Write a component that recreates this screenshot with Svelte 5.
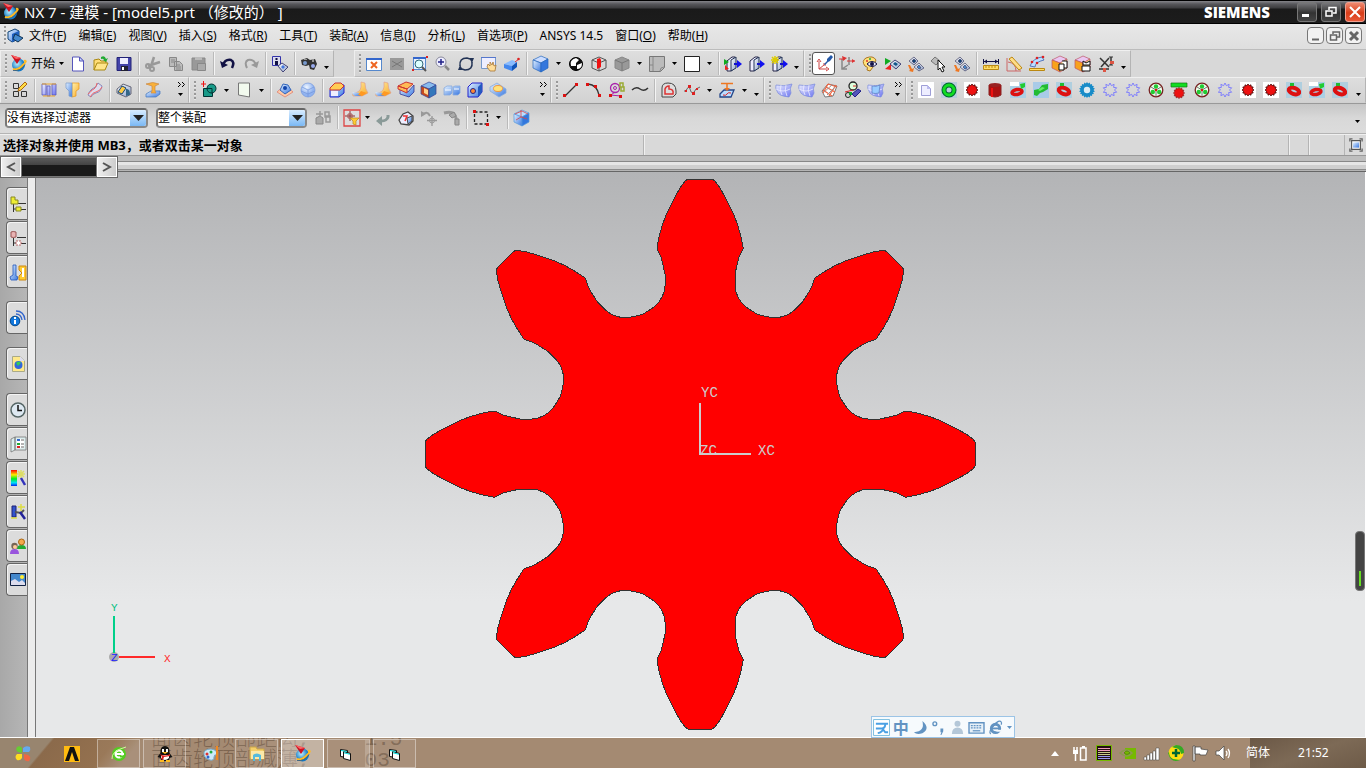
<script>
    const menus = [
        ['文件', 'F'], ['编辑', 'E'], ['视图', 'V'], ['插入', 'S'], ['格式', 'R'], ['工具', 'T'], ['装配', 'A'],
        ['信息', 'I'], ['分析', 'L'], ['首选项', 'P'], ['ANSYS 14.5', ''], ['窗口', 'O'], ['帮助', 'H']
    ];

    const standardTools = 'new open save | cut copy paste | undo redo | info | find'.split(' ');
    const viewTools = 'fit fitoff zoombox zoom rotate pan persp | cube v shade section sectionoff v sheet v white v | door1 door2 door3'.split(' ');
    const utilityTools = 'wcs axes palette showhide hide1 pick hide2 | ruler angle measure copybox linkbox dims'.split(' ');
    const selectionTools = 'link | snapfilter vtight back body movept curve | marquee v | cubeaxis'.split(' ');

    const row2 = [
        { min: 189, more: '»', tools: 'grid | slab revolve sweep | shell | extrude'.split(' ') },
        { min: 362, more: '»', tools: 'sketch v plane v | offset sphere | block horn horn ribs pocket split hole emboss'.split(' ') },
        { min: 211, more: 'v', tools: 'line arc circles spline | outline points v project v'.split(' ') },
        { min: 142, more: '»', tools: 'surf surf mesh swept patch'.split(' ') },
        { min: 0, more: 'v', tools: 'doc ring star drum gearred shaft redring bluering bluestar bluestar wheel rack wheel bluestar star star redring gearred redring'.split(' ') }
    ];

    const sideTabs = [
        ['assembly', 0], ['parts', 0], ['reuse', 0], ['web', 1], ['page', 1], ['clock', 1],
        ['book', 0], ['rainbow', 0], ['process', 0], ['people', 0], ['photo', 0]
    ];

    const tasks = [
        ['flower', 'plain'], ['ansys', 'plain'], ['browser', ''], ['penguin', ''], ['paint', 'plain'],
        ['folder', ''], ['nx', 'active'], ['vb', 'stack'], ['vb', '']
    ];

    const tray = ['plug', 'chip', 'nvidia', 'signal', 'shield', 'flag', 'sound'];

    const cube = (top, left, right, line) =>
        `<g stroke="${line}" stroke-width=".7" stroke-linejoin="round"><path fill="${top}" d="M0 4 8 0l7 3-7 4z"/><path fill="${left}" d="M0 4l8 3v9l-8-4z"/><path fill="${right}" d="M8 7l7-4v9l-7 4z"/></g>`;
    const door = (extra) =>
        `<path fill="#eef" stroke="#224" d="M2 5l5-4h3v11l-4 3H2z"/><path fill="url(#silver)" stroke="#235" d="M6 4l5-3v11l-5 3z"/><path stroke="#11c" stroke-width="2" d="M9 8h5"/><path fill="#11e" d="M12 4l5 4-5 4z"/>${extra}`;
    const horn = '<path fill="url(#gold)" stroke="#d98" stroke-width=".6" d="M9 0l4 1q0 6 3 10l-6 3H1q-1-2 0-3 7 0 8-6z"/><path fill="url(#blue)" d="M1 10l7 1 1 3H3q-4-2-2-4z"/><path fill="#f92" d="M9 9l6 2-5 3-4-1z"/>';
    const surf = '<path fill="url(#violet)" stroke="#78d" stroke-width=".7" d="M0 3q8 2 16-1-3 5-1 9l-2 4Q2 14 1 9q-2-3-1-6z"/><path fill="none" stroke="#eef" stroke-width=".8" d="M5 3q-2 5 1 10M10 3q-2 5 1 11M0 7q7 4 14 0"/>';
    const eyeStack = '<g stroke="#446" stroke-width=".7"><path fill="url(#silver)" d="M1 5l5-4 4 4-4 4z"/><path fill="url(#silver)" d="M6 11l5-4 5 5-5 3z"/><path fill="#147" d="M4 5l2-2 2 2-2 2z"/><path fill="#48c" d="M9 11l2-2 2 3-2 1z"/></g>';

    const teeth = (n, outer, inner) =>
        Array.from({ length: n * 2 }, (_, i) => {
            const r = i % 2 ? inner : outer;
            const a = (i * Math.PI) / n;
            return `${(8 + r * Math.sin(a)).toFixed(1)},${(8 - r * Math.cos(a)).toFixed(1)}`;
        }).join(' ');

    const icons = {
        nx: '<circle cx="7.5" cy="9" r="6.5" fill="url(#globe)"/><path fill="none" stroke="#fb2" stroke-width="2" d="M2 13q5 2 10-4 5-5 1-4"/><path fill="none" stroke="#258" stroke-width=".8" d="M2 14.500q7 1 12-6"/><path fill="#c12" d="M0-1l10 3-4 6z"/><path fill="#f66" d="M0-1l10 3-5 1z"/>',
        part: '<path fill="url(#blue)" stroke="#147" d="M1 4l7-3 4 2v8l-7 3-4-3z"/><path fill="#1d5fc0" d="M5 6l7-3v8l-7 3z"/><path fill="#48c" stroke="#135" d="M8 6l8 4-5 4-5-3z"/>',
        new: '<path fill="#fff" stroke="#55b" d="M2.500 1h7l4 4v10h-11z"/><path fill="#cdf" stroke="#55b" d="M9.500 1v4h4z"/>',
        open: '<path fill="#fd7" stroke="#a81" d="M1 14V4l5-1 2 2h5v2"/><path fill="#ffe58a" stroke="#a81" d="M1 14l3-7h11l-3 7z"/><path fill="#2a3" d="M8 1q4-2 5 2l2-1-2 4-3-2h1q-1-2-3-1z"/>',
        save: '<path fill="#44a" stroke="#227" d="M1 1.500h14v13H1z"/><path fill="#eef" d="M4 2h8v6H4z"/><path fill="#223" d="M5 10h7v5H5z"/><path fill="#fff" d="M6 11h2v3H6z"/>',
        cut: '<path fill="none" stroke="#999" stroke-width="2.500" d="M9 1L6 10M15 6L3 10"/><circle cx="3" cy="10" r="2" fill="none" stroke="#999" stroke-width="2"/><circle cx="7" cy="13" r="2" fill="none" stroke="#999" stroke-width="2"/>',
        copy: '<path fill="#bbb" stroke="#888" d="M1.500 1.500h7v9h-7zM6.500 5.500h5l3 3v6h-8z"/><path stroke="#888" d="M3 4h4M3 6h3M8 9h4M8 11h5M8 13h5"/>',
        paste: '<path fill="#999" stroke="#888" d="M1 2h13v12H1z"/><path fill="#bbb" d="M4 1h7v3H4z"/><path fill="#aaa" stroke="#888" d="M6.500 7.500h8v7h-8z"/>',
        undo: '<path fill="none" stroke="#114" stroke-width="2.500" d="M3 9q2-6 8-5 4 2 1 8"/><path fill="#114" d="M0 5l2 7 6-3z"/>',
        redo: '<path fill="none" stroke="#999" stroke-width="2" d="M13 9q-2-6-8-5-4 2-1 8"/><path fill="#999" d="M16 5l-2 7-6-3z"/>',
        info: '<path fill="#dde" stroke="#33a" d="M.500.500h8v9h-8z"/><path fill="#114" d="M3.500 2h2v2h-2zM3 5h3v4H3z"/><path fill="url(#silver)" stroke="#447" d="M6 10l4-3 6 4-5 5z"/><path fill="#47d" d="M9 11l2-2 2 2-2 2z"/>',
        find: '<path fill="#333" d="M0 4l6-2 3 2 5-1 2 5-3 6-4-1-1-4-3 1-4-1z"/><circle cx="4" cy="7" r="2" fill="#79c"/><circle cx="12" cy="10" r="2" fill="#9ae"/><path fill="#999" d="M3 3h3v1H3zM11 3h2v3h-2z"/>',
        fit: '<path fill="#fff" stroke="#58c" d="M.500 2.500h15v12H.500z"/><path fill="#36c" d="M0 2h16v2H0z"/><path stroke="#e62" stroke-width="2" d="M5 6l6 6M11 6l-6 6"/>',
        fitoff: '<path fill="#999" d="M1 2h14v12H1z"/><path stroke="#777" d="M3 5l10 6M13 5L3 11"/>',
        zoombox: '<path fill="#e8f0ff" stroke="#58c" d="M1.500 2.500h12v11h-12z"/><path fill="#36c" d="M1 1h13v2H1z"/><circle cx="7" cy="8" r="4" fill="#dff" stroke="#367"/><path stroke="#555" stroke-width="2" d="M10 11l4 4"/><path fill="#d22" d="M14 0h2v2h-2zM0 13h2v2H0z"/>',
        zoom: '<circle cx="6" cy="6" r="5" fill="#eef" stroke="#889"/><path stroke="#228" stroke-width="1.500" d="M3 6h6M6 3v6"/><path stroke="#888" stroke-width="2.500" d="M10 10l4 4"/>',
        rotate: '<path fill="none" stroke="#235" stroke-width="1.500" d="M2 10q-1-8 7-8l3 1M14 6q1 8-7 8l-3-1"/><path fill="#235" d="M11 2h5l-2 5zM5 14H0l2-5z"/>',
        pan: '<path fill="#eef" stroke="#79c" d="M.500 1.500h14v11H.500z"/><path fill="#57c" d="M0 1h15v1H0z"/><path fill="#fd9" stroke="#a73" stroke-width=".8" d="M7 8l2 2V6l2 3 1-3 1 4 2-1-1 6H9l-3-4z"/>',
        persp: '<path fill="#8bf" d="M0 8l8-4 5 2-5 4z"/><path fill="#48e" d="M0 8l8 2v5l-8-3z"/><path fill="#15b" d="M8 10l5-4v5l-5 4z"/><path stroke="#d33" d="M11 6l4-3"/><circle cx="14.500" cy="3" r="1.300" fill="#d22"/>',
        cube: cube('#cdf', 'url(#blue)', '#37d', '#26b'),
        cubeaxis: cube('#bdf', 'url(#blue)', '#37d', '#59d') + '<path fill="none" stroke="#d44" stroke-width=".8" d="M1 4l7-3 6 3M7 0v7l6 2M7 7l-5 3"/>',
        shade: '<circle cx="8" cy="8" r="6.500" fill="#111" stroke="#000"/><path fill="#fff" d="M8 2q-7 2-5 8h5V7l3-3zM9 9l5-2q0 6-5 6z"/>',
        section: '<path fill="none" stroke="#555" d="M1 4l7-3 7 3v8l-7 3-7-3zM1 4l7 3 7-3M8 7v8"/><path fill="#e11" d="M6 3l3-1 1 2v7l-4 2z"/>',
        sectionoff: '<path fill="#999" stroke="#888" d="M1 4l7-3 7 3v8l-7 3-7-3z"/><path fill="none" stroke="#777" d="M1 4l7 3 7-3M8 7v8"/>',
        sheet: '<path fill="#bbb" stroke="#777" d="M.500.500h15v11l-4 4H.500z"/><path fill="none" stroke="#888" d="M4 1v14M1 9h3M11 15q0-4 4-4"/>',
        white: '<path fill="#fff" stroke="#222" d="M.500.500h15v15H.500z"/>',
        door1: door('<path fill="#1a2" d="M-1 3l5 3-5 3z"/><path fill="#e22" d="M0 9l4 4-4 1z"/>'),
        door2: door(''),
        door3: door('<path stroke="#dc0" stroke-width="1.500" d="M4 0v8M0 4h8M1 1l6 6M7 1L1 7"/>'),
        wcs: '<path fill="none" stroke="#c44" d="M3 5v8h8M3 13l5-4M1 6l2-3 2 3M10 11l3 2-3 2M7 8h2v2"/><path fill="#2458a8" d="M11 3l4-4 2 2-3 4-2 1-3 3-1-1 3-3z"/>',
        axes: '<path fill="none" stroke="#888" stroke-width="1.500" d="M3 3v10h5M3 13l6-4M10 1v8"/><path stroke="#d33" d="M0 3h6M8 5h8"/><path fill="#d33" d="M3 0l5 2-4 3zM13 3l3 2-3 2z"/>',
        palette: '<path fill="#ffe07a" stroke="#a72" d="M5 14q2-3-2-4-4-5 1-8 7-3 10 2l-3 7-3 4z"/><circle cx="5" cy="5" r="1" fill="#d33"/><circle cx="8" cy="3" r="1" fill="#2a4"/><path fill="#eef" stroke="#114" d="M5 8q5-5 10 0-5 5-10 0z"/><circle cx="10" cy="8" r="2" fill="#114"/>',
        showhide: '<path fill="#1a2" d="M0 2l6 3-6 4z"/><path fill="#e22" d="M0 13l6-5v6z"/><path fill="url(#silver)" stroke="#447" d="M5 8l5-4 6 4-5 5z"/><path fill="#158" d="M8 8l2-2 3 2-2 2z"/>',
        hide1: eyeStack + '<path fill="#e72" d="M0 9h2l2 4 2-1-1 4-4-1 1-1z"/>',
        pick: '<path fill="#bbb" stroke="#777" d="M0 5l4-4 5 4-4 4z"/><path fill="#fff" stroke="#111" d="M7 4l7 7h-3l2 4-2 1-2-4-2 2z"/>',
        hide2: eyeStack + '<path fill="#e72" d="M0 9h2l2 4 2-1-1 4-4-1 1-1z"/>',
        ruler: '<path stroke="#114" d="M.500 3v5M15.500 3v5M1 5.500h14"/><path fill="#114" d="M1 5.500l3-2v4zM15 5.500l-3-2v4z"/><path fill="#fd6" stroke="#b81" d="M.500 9.500h15v4H.500z"/><path stroke="#b81" d="M3 10v2M6 10v2M9 10v2M12 10v2"/>',
        angle: '<path fill="none" stroke="#c66" d="M1 2v13h14M2 6q8 1 8 9"/><path fill="#fd8" stroke="#b81" d="M3 3l3-2 10 11-3 2z"/>',
        measure: '<path fill="#bdf" stroke="#57b" d="M1 10q3-8 12-9l2 3q-9 2-9 7z"/><g fill="#d22"><circle cx="3" cy="6" r="1.300"/><circle cx="8" cy="2" r="1.300"/><circle cx="14" cy="1" r="1.300"/><circle cx="8" cy="7" r="1.300"/></g><path fill="#fd6" stroke="#b81" d="M.500 12.500h15v2H.500z"/>',
        copybox: cube('#e9c7f2', '#f8a21c', '#ffe08a', '#b56') + '<path fill="#fff" stroke="#111" d="M7 8h5v6H7zM10 5h5v7h-3"/>',
        linkbox: cube('#e9c7f2', '#f8a21c', '#ffe08a', '#b56') + '<path fill="#fff" stroke="#111" d="M7 10h8v5H7zM8 5l3 2 4-2v4H8z"/>',
        dims: '<path fill="none" stroke="#333" stroke-width="1.500" d="M2 2l9 9M11 2L3 11M1 13h10M13 1v8"/><path fill="#d54" d="M5 12h3v4H5zM12 5h4v3h-4z"/><path stroke="#333" d="M11 1h4M11 9h4"/>',
        grid: '<path fill="none" stroke="#333" d="M1.500 1.500h5v5h-5zM1.500 9.500h5v5h-5zM9.500 9.500h5v5h-5z"/><path fill="#fd4" stroke="#a61" d="M6 9l1-3 6-6 2 2-6 6z"/>',
        slab: '<path fill="url(#violet)" stroke="#55b" stroke-width=".8" d="M1 2h4v11H1zM6 4h3v10H6zM11 2h4v11h-4z"/><path stroke="#e9a52c" d="M1 2h14M2 14h12"/>',
        revolve: '<path fill="url(#gold)" stroke="#e91" stroke-width=".7" d="M8 1h7v6l-3 2v5l-4 1z"/><path fill="url(#blue)" stroke="#79c" stroke-width=".7" d="M8 1H2v5l3 3v5l3 1z"/>',
        sweep: '<path fill="#dde" stroke="#88b" d="M1 13q1-4 4-6 4-1 6-6l4 3q-1 6-6 7-4 1-5 4z"/><path fill="none" stroke="#e66" d="M1 12q3-2 4-4 4-1 5-7M3 15q3-5 6-5 4-1 6-5"/>',
        shell: '<path fill="url(#silver)" stroke="#667" d="M1 7l6-5 8 3v7l-5 3-9-4z"/><path fill="#fc4" stroke="#147" d="M6 4l4 2-4 6-4-2z"/><path fill="#368" d="M10 7q4-1 4 6l-4 1z"/>',
        extrude: '<path fill="url(#blue)" stroke="#47b" stroke-width=".7" d="M1 12l5-3h9v3l-4 3H1z"/><path fill="#f9b13a" stroke="#c84" stroke-width=".7" d="M1 2q7-3 13 0l-4 2v5l1 2H6l1-2V4z"/>',
        sketch: '<path fill="#189a88" stroke="#033" d="M2.500 6.500h9v8h-9z"/><circle cx="10.500" cy="6.500" r="4.500" fill="#189a88" stroke="#033"/><path fill="none" stroke="#033" d="M5 6.500h6v5"/><path stroke="#e11" d="M0 2h5M2.500-1v6"/>',
        plane: '<path fill="#f2faee" stroke="#777" d="M2.500 1h11v14l-11-2z"/>',
        offset: '<path fill="#fca" stroke="#d76" stroke-width=".7" d="M0 10l8-7 8 7-8 5z"/><path fill="url(#blue)" stroke="#36b" d="M3 8l3-6 5 1 3 5-6 4z"/><circle cx="8" cy="6" r="2" fill="#14a"/>',
        sphere: '<circle cx="8" cy="8" r="7" fill="url(#globe2)" stroke="#79d" stroke-width=".7"/><path fill="none" stroke="#79d" stroke-width=".8" d="M2 5l6 3 6-3M8 8v7M1 9l7 3 7-3"/>',
        block: '<path fill="url(#blue)" stroke="#22c" d="M1 8l4-5h10v8l-5 4H1z"/><path fill="#fc5" stroke="#c33" d="M1 6l5-5h6l3 3-4 4H1z"/><path fill="#eef" d="M2 9h7v5H2z"/>',
        horn,
        ribs: '<path fill="url(#blue)" stroke="#228" stroke-width=".7" d="M2 7l8 3 6-7v7l-5 5-9-3z"/><path fill="#fb5" stroke="#c33" d="M0 4l8-4 7 2-6 5zM0 4l9 3v4L0 7z"/>',
        pocket: cube('#8be', '#c74a1d', '#37b', '#349') + '<path fill="#ffd28a" d="M3 6l4 2v5l-4-2z"/>',
        split: '<path fill="url(#blue)" stroke="#8ad" stroke-width=".8" d="M0 6l3-2h5v7l-2 2H0zM9 5l2-1h5v7l-2 2H9z"/><path stroke="#fff" d="M1 8h6M10 7h5"/>',
        hole: '<path fill="url(#blue)" stroke="#22c" d="M1 5l4-4h10v9l-4 5H1z"/><path fill="#2458c0" d="M11 5l4-4v9l-4 5z"/><circle cx="6" cy="9" r="2.500" fill="#f83" stroke="#228"/>',
        emboss: '<path fill="url(#blue)" stroke="#8ad" stroke-width=".8" d="M0 5l7-4 9 6v4l-7 4-9-6z"/><ellipse cx="8" cy="6.500" rx="4.500" ry="3" fill="#ffe27a" stroke="#e94"/>',
        line: '<path stroke="#333" stroke-width="1.300" d="M2 14L14 2"/><path fill="#d11" d="M0 12h3v3H0zM12 1h3v3h-3z"/>',
        arc: '<path fill="none" stroke="#333" stroke-width="1.300" d="M2 2q9 1 11 11"/><path fill="#d11" d="M0 1h3v3H0zM8 3h3v3H8zM12 12h3v3h-3z"/>',
        circles: '<circle cx="6" cy="6" r="4.500" fill="none" stroke="#a2a" stroke-width="1.300"/><circle cx="6" cy="6" r="1.500" fill="none" stroke="#a2a"/><path stroke="#a2a" d="M1 13l11 1M2 13l4-3"/><path fill="none" stroke="#9a3" stroke-width="1.500" d="M11 1h3v4h-3zM12 5h3v4h-3z"/><path fill="#d11" d="M0 12h3v3H0zM10 13h3v3h-3z"/>',
        spline: '<path fill="none" stroke="#333" stroke-width="1.500" d="M0 8q4-4 8-1 4 3 8-1"/>',
        outline: '<path fill="#ddd" stroke="#444" d="M1 15V6q0-5 6-5 8 0 8 8v3l-3 3z"/><path fill="none" stroke="#d33" stroke-width="1.500" d="M4 12V7q1-3 4-3v3q5 0 4 5z"/>',
        points: '<path fill="none" stroke="#666" d="M0 9q2 1 3-2 2-4 3 0 2 8 6 0l4-2"/><path fill="#d22" d="M4 3h3v3H4zM1 8h2v2H1zM8 10h3v3H8zM12 6h2v2h-2z"/>',
        project: '<path fill="#bdf" stroke="#248" stroke-width="1.300" d="M1 12l4-4h10l-3 7H1z"/><path fill="none" stroke="#d22" d="M4 13q3 1 4-1t4-1"/><path stroke="#e72" stroke-width="1.500" d="M2 1.500h12M8 1v7"/><path fill="#e72" d="M5 6h6l-3 3z"/>',
        surf,
        mesh: '<path fill="#fff" stroke="#777" d="M0 9l6-7 9 2-4 10-8 1z"/><path fill="none" stroke="#e64" stroke-width="1.300" d="M1 8l9 6M4 5l9 5M6 2l9 3M6 2L1 11M14 3L7 14"/><path fill="none" stroke="#999" d="M2 10l8-7M5 13l8-8"/>',
        swept: '<circle cx="8" cy="4" r="4" fill="#dfd" stroke="#222" stroke-width="1.300"/><circle cx="3" cy="13" r="2.500" fill="none" stroke="#222"/><path fill="#55b" stroke="#228" d="M7 12l6-5 3 2-6 6z"/><path stroke="#d22" d="M0 10l8-2M8 4h3"/><path fill="#1a3" d="M4 10h3v3H4z"/>',
        patch: surf + '<path fill="#9cf" stroke="#57b" stroke-width=".7" d="M4 4q4 1 8-1l-1 8q-4 1-7 0z"/>',
        doc: '<path fill="#fff" d="M0 0h16v16H0z"/><path fill="#eef" stroke="#88c" stroke-width=".8" d="M3.500 3.500h6l3 3v7h-9z"/><path fill="#bbe" d="M9 3v4h4z"/>',
        ring: '<path fill="#bcd" d="M0 0h16v16H0z"/><circle cx="8" cy="8" r="5" fill="none" stroke="#063" stroke-width="5"/><circle cx="8" cy="8" r="5" fill="none" stroke="#1d2" stroke-width="3"/>',
        star: `<path fill="#fff" d="M0 0h16v16H0z"/><polygon points="${teeth(12, 6, 4.5)}" fill="#e11" stroke="#400" stroke-width=".8"/>`,
        drum: '<path fill="#a11" stroke="#822" d="M2 3v10q6 4 12 0V3z"/><ellipse cx="8" cy="3" rx="6" ry="2" fill="#922"/><path fill="#e11" d="M4 6h2v9H4z"/>',
        gearred: '<path fill="#abd0e6" d="M0 0h16v16H0z"/><path fill="#fff" d="M0 0h9v4H0z"/><ellipse cx="7" cy="10" rx="5" ry="2.500" fill="none" stroke="#d11" stroke-width="3.500" transform="rotate(-10 7 10)"/><path fill="#2c3" d="M10 2l5-1v4l-4 2z"/>',
        shaft: '<path fill="#a9cbe8" d="M0 0h16v16H0z"/><path fill="#2b3" d="M1 8l5-1 3-4 6-1v5l-5 3-3 1-3 3-3-1z"/><path fill="#6e6" d="M5 8l4-3 3 1-5 3z"/>',
        redring: '<path fill="#b0cfdf" d="M0 0h16v16H0z"/><ellipse cx="8" cy="9" rx="5.500" ry="3" fill="none" stroke="#d11" stroke-width="4" transform="rotate(20 8 9)"/><path fill="#2b3" d="M4 1h4v3H4z"/>',
        bluering: `<polygon points="${teeth(18, 8, 6.5)}" fill="#178bc8"/><circle cx="8" cy="8" r="3.200" fill="#dcecf4"/>`,
        bluestar: `<polygon points="${teeth(10, 7, 4.5)}" fill="none" stroke="#77f" stroke-width=".9"/>`,
        wheel: '<circle cx="8" cy="8" r="6.800" fill="#efe" stroke="#722" stroke-width="1.300"/><g fill="#2c3"><circle cx="8" cy="4.500" r="2.200"/><circle cx="4.800" cy="10" r="2.200"/><circle cx="11.200" cy="10" r="2.200"/></g><path stroke="#555" stroke-width=".8" d="M8 8L3 5M8 8l5-3M8 8v6"/><circle cx="8" cy="8" r="1.200" fill="#d11"/>',
        rack: `<polygon points="${teeth(12, 5.6, 4.2)}" fill="#e11" stroke="#811" stroke-width=".7" transform="translate(0 3)"/><path fill="#1d2" stroke="#171" stroke-width=".7" d="M0 1h16v4H0z"/>`,
        link: '<path fill="#aaa" stroke="#888" d="M1 8l4-2 3 2v6H1z"/><path fill="none" stroke="#999" stroke-width="1.500" d="M1 4h7M5 1v6M10 2h4v5h-4zM11 6h4v6h-4z"/>',
        snapfilter: '<path fill="#ddd" stroke="#d44" stroke-width="1.300" d="M0 0h16v16H0z"/><path stroke="#833" d="M1 6h10M6 1v10"/><path fill="none" stroke="#a55" d="M4 4h4v4H4z"/><path fill="#fc3" stroke="#b82" stroke-width=".7" d="M6 8h9l-3 3v4l-3-1v-3z"/>',
        back: '<path fill="none" stroke="#8a9a98" stroke-width="3" d="M13 5v2q-1 4-7 4"/><path fill="#8a9a98" d="M7 6l-6 5 6 5z"/>',
        body: '<path fill="#eef" stroke="#444" stroke-width="1.300" d="M1 10l4-6 5-2 5 4v5l-4 4-8-1z"/><path fill="url(#blue)" stroke="#444" d="M9 8l5-2v5l-4 3z"/><path fill="none" stroke="#e33" stroke-width="1.500" d="M5 6h4l-2 5"/>',
        movept: '<path fill="none" stroke="#999" stroke-width="2" d="M1 5q5-5 8 1"/><path stroke="#999" stroke-width="1.300" d="M6 10.500h10M11 6v10"/><circle cx="11" cy="10.500" r="2.500" fill="none" stroke="#999"/><path fill="#999" d="M0 1v6l5-3z"/>',
        curve: '<path fill="none" stroke="#999" stroke-width="3" d="M0 3q7-2 10 1 3 3 2 10"/><path fill="#aaa" stroke="#888" d="M5 5l5-3 2 4-4 2zM11 9h4v6h-4z"/>',
        marquee: '<path fill="none" stroke="#222" stroke-dasharray="3 2" stroke-width="1.300" d="M1.500 2h13v12h-13z"/><path fill="#d11" d="M0 0h3v3H0zM13 13h3v3h-3z"/>',
        full: '<path fill="none" stroke="#666" stroke-width="1.500" d="M1 4V1h3M12 1h3v3M15 12v3h-3M4 15H1v-3"/><path fill="#fff" stroke="#555" stroke-width="1.300" d="M3 3h10v10H3z"/><path fill="url(#blue)" d="M4.500 5h7v6h-7z"/>',
        assembly: '<path stroke="#333" d="M7 7.500h9M10 13.500h6M3.500 8v8M3 13h4" fill="none"/><path fill="#ee3" stroke="#882" d="M1 1h4v3h3v4H1zM6 11h5v4H6z"/>',
        parts: '<path stroke="#333" d="M7 7.500h9M10 13.500h6M3.500 8v8M3 13h4" fill="none"/><path fill="#e9b4b4" stroke="#955" d="M1 2q2-1 5 0v5q-3 1-5 0z"/><path fill="#fff" stroke="#b66" stroke-dasharray="2 1" d="M6 11h5v4H6z"/>',
        reuse: '<path fill="url(#blue)" stroke="#25b" stroke-width=".8" d="M3 1h3v11l2 1-1 3H1l-1-3 3-2z"/><path fill="#fc3" stroke="#c81" d="M9 2h7v14H9v-4l3-3-3-3z"/><path fill="#fff" d="M12 4h2v9h-2z"/>',
        web: '<circle cx="5" cy="11" r="4.800" fill="#17d" stroke="#048"/><path fill="#fff" d="M4 7h2v2H4zM4 10h2v4H4z"/><path fill="none" stroke="#36c" stroke-width="1.300" d="M6 1q8 0 9 9M6 4q5 0 6 6"/>',
        page: '<path fill="#ffe98a" stroke="#aa8" d="M2.500.500h8l4 4v11h-12z"/><path fill="#dde" d="M10 0v5h5z"/><circle cx="8.500" cy="9" r="4" fill="#36d"/><path fill="#3c5" d="M6 7q3-3 5 0l-3 3z"/>',
        clock: '<circle cx="8" cy="8" r="7" fill="#dee9f2" stroke="#566" stroke-width="1.500"/><path fill="none" stroke="#111" stroke-width="1.500" d="M8 3v5.500h4"/>',
        book: '<path fill="#dee" stroke="#777" stroke-width=".8" d="M1 3l4-2v13l-4 2zM5 1h11v13H5z"/><path fill="#fff" d="M7 3h7v9H7z"/><path fill="#36c" d="M7 3h3v2H7z"/><path fill="#2a3" d="M7 7h3v2H7z"/><path fill="#d22" d="M7 10h3v2H7z"/><path stroke="#666" d="M11 4h3M11 8h3M11 11h3"/>',
        rainbow: '<path fill="url(#spectrum)" d="M1 0h6v16H1z"/><path stroke="#dd6" stroke-width="1.500" d="M11 0v8M7 4h8M8 1l6 6M14 1L8 7"/><path stroke="#33b" stroke-width="2.500" d="M11 8l4 7"/>',
        process: '<path fill="#35c" stroke="#227" d="M2 2h4v11H2z"/><path stroke="#555" stroke-width="2" d="M5 8l6 1 3-3"/><path stroke="#dd4" stroke-width="1.500" d="M11 0v7M8 3h7M1 14h6"/><path stroke="#229" stroke-width="2.500" d="M10 8l5 7"/>',
        people: '<path fill="#2a3" d="M7 11q0-4 4.500-4t4.500 4z"/><circle cx="11.500" cy="4" r="3" fill="#f4a94c" stroke="#a61"/><path fill="#95d" d="M0 16q0-5 4.500-5T9 16z"/><circle cx="4.500" cy="8" r="3.200" fill="#765"/><circle cx="5" cy="9" r="2" fill="#fc9"/>',
        photo: '<path fill="#48c" stroke="#124" d="M.500 1.500h15v12H.500z"/><path fill="#dde" d="M1 13V9l4-2 4 3 3-2 3 3v2z"/><circle cx="12" cy="5" r="2" fill="#fe3"/>',
        flower: '<path fill="#6c3" d="M7 7V2Q5-1 2 1q-2 3 1 5z"/><path fill="#6ae" d="M8 6h6q2-2 1-5-4-2-7 1z"/><path fill="#e64" d="M9 8v5q2 3 5 2 3-4-1-6z"/><path fill="#fd2" d="M7 8H2q-3 3 0 6 3 1 5-2z"/>',
        ansys: '<path fill="#fb1" d="M0 0h16v16H0z"/><path fill="#111" d="M1 15L6 1h4l5 14h-4L8 6l-3 9z"/>',
        browser: '<circle cx="8" cy="8" r="7" fill="#5c2"/><circle cx="8" cy="8" r="3.500" fill="none" stroke="#fff" stroke-width="2"/><path fill="#fff" d="M5 7h8v2H5z"/><path fill="#5c2" d="M9 9.500h5v2H9z"/><path fill="none" stroke="#cf9" d="M1 13Q0 5 15 1"/>',
        penguin: '<path fill="#111" d="M8 0q5 0 4.500 7l3 4-3 1-1 3h-7l-1-3-3-1 3-4Q3 0 8 0z"/><path fill="#fff" d="M4 9h8v3q-4 4-8 0zM5 3h2v3H5zM9 3h2v3H9z"/><path fill="#fb2" d="M5 6h6l-3 2zM3 14h4v2H3zM9 14h4v2H9z"/><path fill="#d22" d="M3 8q5 3 10 0v2l-6 1-1 3-2-1 1-2z"/>',
        paint: '<path fill="#cdeaf8" stroke="#7ac" d="M1 9q-1-6 7-6 7 1 6 6-3-1-3 2 0 4-4 3-5-1-6-5z"/><circle cx="4" cy="8" r="1.500" fill="#d33"/><circle cx="8" cy="6" r="1.500" fill="#2a4"/><circle cx="5" cy="11" r="1.500" fill="#36c"/><path stroke="#e82" stroke-width="2" d="M14 0v14"/>',
        folder: '<path fill="#f4cf6a" stroke="#c9a548" d="M1 1h6l1 2h7v10H1z"/><path fill="#fbe9a8" d="M2 5h13v8H2z"/><path fill="#5bd" d="M4 9q4-3 8 0v6h-2v-4H6v4H4z"/>',
        vb: '<path fill="#fff" stroke="#111" d="M2.500 3.500l7 1v7l-7-1z"/><path fill="#fff" stroke="#111" d="M5.500 5.500l7 2v7l-7-2z"/><path stroke="#0dd" d="M3 4.500l6 1M6 6.800l6 1.500"/>',
        plug: '<path stroke="#fff" stroke-width="1.500" d="M2 2v3M5 2v3M3.500 9v7"/><path fill="#fff" d="M1 5h5v4H1z"/><path fill="none" stroke="#fff" stroke-width="1.500" d="M8.500 3h5.500v12H8.500z"/><path fill="#fff" d="M10 1h3v2h-3z"/>',
        chip: '<path fill="#211" stroke="#7b0" d="M.500.500h15v15H.500z"/><path stroke="#e9b" d="M2 3.500h12M2 5.500h12"/><path stroke="#cc8" d="M2 7.500h12M2 9.500h12"/><path stroke="#99e" d="M2 11.500h12M2 13.500h12"/>',
        nvidia: '<path fill="#76b900" d="M5 3h11v11H5z"/><path fill="none" stroke="#8b9a50" stroke-width="1.500" d="M0 8q6-6 12 0-5 6-12 0z"/><path fill="none" stroke="#5a8a10" d="M4 8q3-4 6 0-3 3-6 0z"/>',
        signal: '<g fill="#fff" stroke="#444" stroke-width=".5"><path d="M0 12h2.500v3H0zM3 10h2.500v5H3zM6 8h2.500v7H6zM9 6h2.500v9H9zM12 3h3v12h-3z"/></g>',
        shield: '<circle cx="8" cy="8" r="7.500" fill="#fd1"/><path fill="#3a2" d="M8 0q8 0 8 8l-3 1q-1-6-6-6L4 2zM1 7q0 5 4 7l7 1q-9 4-12-7z"/><path stroke="#063" stroke-width="2.500" d="M4 8h8M8 4v8"/>',
        flag: '<path fill="#fff" stroke="#444" stroke-width=".7" d="M1 1h2v15H1zM3 2h6v2l7 1-2 5H8V9H3z"/>',
        sound: '<path fill="#fff" stroke="#444" stroke-width=".7" d="M0 6h3l5-5v14l-5-5H0z"/><path fill="none" stroke="#fff" stroke-width="1.300" d="M10 6q2 2 0 5M12 4q3 4 0 9"/>',
        pen: '<path fill="#fff" stroke="#7bd" d="M-.500-.500h17v17h-17z"/><path fill="none" stroke="#4aa0e4" stroke-width="2" d="M2 4h13M2 9h7q3-1 3-4M4 14q5-1 6-5M9 9l3 4h3"/>',
        moon: '<path fill="#6293c2" d="M10 1q9 8 0 13-6 2-9-1 12-1 9-12z"/>',
        punct: '<circle cx="3" cy="4" r="2" fill="none" stroke="#6293c2" stroke-width="1.500"/><path fill="#6293c2" d="M9 9h3v3l-2 4H9l1-3H9z"/>',
        person: '<circle cx="8" cy="4" r="3.200" fill="#b4c7d8"/><path fill="#b4c7d8" d="M2 15q0-7 6-7t6 7z"/>',
        keyboard: '<path fill="#e8f1f8" stroke="#6293c2" stroke-width="1.500" d="M0 3h16v11H0z"/><path stroke="#6293c2" stroke-width="1.300" stroke-dasharray="2 1" d="M2 6h12M2 8.500h12"/><path stroke="#6293c2" stroke-width="1.300" d="M4 11.500h8"/>',
        ie: '<circle cx="8" cy="9" r="4.500" fill="none" stroke="#6293c2" stroke-width="3"/><path stroke="#6293c2" stroke-width="2" d="M4 9h9"/><path stroke="#f4f8fc" stroke-width="2" d="M9 11.500h6"/><path fill="none" stroke="#6293c2" stroke-width="1.300" d="M3 15Q0 13 6 6t8-4q1 1 0 3"/>'
    };

    // right half of one tooth, tip to root, gear centre at 0,0
    const flank = [
        [0, -275], [12, -275], [15, -273], [20, -266], [25, -257], [29, -249], [34, -239], [38, -228], [41, -217],
        [43, -207], [43, -205], [39, -197], [37, -189], [35, -180], [35, -168], [36, -162], [38, -157],
        [41, -152], [46, -147], [52, -143], [57, -140]
    ];
    const tooth = [...flank.slice(1).reverse().map(([x, y]) => [-x, y]), ...flank];
    const gear = Array.from({ length: 8 }, (_, i) => {
        const a = (i * Math.PI) / 4;
        return tooth.map(([x, y]) =>
            `${(x * Math.cos(a) - y * Math.sin(a)).toFixed(1)},${(x * Math.sin(a) + y * Math.cos(a)).toFixed(1)}`
        ).join(' ');
    }).join(' ');
</script>

{#snippet icon(name)}
    <svg class="icon" viewBox="0 0 16 16" fill="none" aria-hidden="true">{@html icons[name]}</svg>
{/snippet}

{#snippet caret()}
    <svg class="arrow" viewBox="0 0 5 3" aria-hidden="true"><path d="M0 0h5L2.5 3z" /></svg>
{/snippet}

{#snippet toolList(tools)}
    {#each tools as tool}
        {#if tool === '|'}
            <span class="sep"></span>
        {:else if tool === 'v' || tool === 'vtight'}
            <button class="drop" class:tight={tool === 'vtight'} aria-label="更多">{@render caret()}</button>
        {:else}
            <button class="tool" class:pressed={tool === 'wcs'} aria-label={tool}>{@render icon(tool)}</button>
        {/if}
    {/each}
{/snippet}

{#snippet overflow(kind)}
    <button class="overflow" class:wide={kind === '»'} aria-label="工具条选项">
        {#if kind === '»'}
            <svg class="chevrons" viewBox="0 0 8 5" aria-hidden="true"><path d="M1 0l2.500 2.500L1 5M5 0l2.500 2.500L5 5" /></svg>
        {/if}
        {@render caret()}
    </button>
{/snippet}

<svg class="defs" aria-hidden="true">
    <defs>
        <linearGradient id="blue" x2="1" y2="1"><stop stop-color="#e4f2ff" /><stop offset="1" stop-color="#3a78e0" /></linearGradient>
        <linearGradient id="violet" x2="1" y2="1"><stop stop-color="#eef0ff" /><stop offset="1" stop-color="#6c74f0" /></linearGradient>
        <linearGradient id="silver" x2="1" y2="1"><stop stop-color="#fff" /><stop offset="1" stop-color="#8ea4cc" /></linearGradient>
        <linearGradient id="gold" x2="1" y2="1"><stop stop-color="#fff3b0" /><stop offset="1" stop-color="#f8a928" /></linearGradient>
        <linearGradient id="spectrum" x2="0" y2="1">
            <stop stop-color="#f00" /><stop offset=".3" stop-color="#fe0" /><stop offset=".55" stop-color="#0e2" />
            <stop offset=".8" stop-color="#0df" /><stop offset="1" stop-color="#02e" />
        </linearGradient>
        <radialGradient id="globe" cx=".4" cy=".4"><stop stop-color="#bff2ff" /><stop offset="1" stop-color="#1177c4" /></radialGradient>
        <radialGradient id="globe2" cx=".4" cy=".3"><stop stop-color="#eef6ff" /><stop offset="1" stop-color="#8fb2f0" /></radialGradient>
    </defs>
</svg>

<div class="screen">
    <header class="titlebar">
        {@render icon('nx')}
        <h1>NX 7 - 建模 - [model5.prt （修改的） ]</h1>
        <strong>SIEMENS</strong>
        <div class="winbtns">
            <button aria-label="最小化"><svg viewBox="0 0 12 12"><path d="M1 9.500h7" stroke-width="3" /></svg></button>
            <button aria-label="还原"><svg viewBox="0 0 12 12"><path d="M1 5h6v5H1zM4 4V1.500h7V7H8" stroke-width="1.500" /></svg></button>
            <button class="close" aria-label="关闭"><svg viewBox="0 0 12 12"><path d="M1 1l10 10M11 1L1 11" stroke-width="2" /></svg></button>
        </div>
    </header>

    <nav class="menubar">
        <span class="grip"></span>
        {@render icon('part')}
        <div class="menus">
            {#each menus as [label, key]}
                <button>{label}{#if key}(<u>{key}</u>){/if}</button>
            {/each}
        </div>
        <div class="docbtns">
            <button aria-label="最小化文档"><svg viewBox="0 0 12 12"><path d="M2 9.500h7" stroke-width="2" /></svg></button>
            <button aria-label="还原文档"><svg viewBox="0 0 12 12"><path d="M1.500 5h6v5h-6zM4 4V2h6.500v5H8" stroke-width="1.500" /></svg></button>
            <button aria-label="关闭文档"><svg viewBox="0 0 12 12"><path d="M2 2l8 8M10 2l-8 8" stroke-width="3" /></svg></button>
        </div>
    </nav>

    <div class="toolrow">
        <div class="band first">
            <span class="grip"></span>
            <button class="start">{@render icon('nx')}<span>开始</span>{@render caret()}</button>
            {@render toolList(standardTools)}
            {@render overflow('v')}
        </div>
        <div class="band">
            <span class="grip"></span>
            {@render toolList(viewTools)}
            {@render overflow('v')}
        </div>
        <div class="band">
            <span class="grip"></span>
            {@render toolList(utilityTools)}
            {@render overflow('v')}
        </div>
    </div>

    <div class="toolrow second">
        {#each row2 as band}
            <div class="band" class:grow={!band.min} style:min-width="{band.min}px">
                <span class="grip"></span>
                {@render toolList(band.tools)}
                {@render overflow(band.more)}
            </div>
        {/each}
    </div>

    <div class="selection">
        <div class="combo filter">
            <select aria-label="选择过滤器"><option>没有选择过滤器</option></select>
            <span class="knob"><svg viewBox="0 0 11 6" aria-hidden="true"><path d="M0 0h11L5.500 6z" /></svg></span>
        </div>
        <div class="combo scope">
            <select aria-label="选择范围"><option>整个装配</option></select>
            <span class="knob"><svg viewBox="0 0 11 6" aria-hidden="true"><path d="M0 0h11L5.500 6z" /></svg></span>
        </div>
        {@render toolList(selectionTools)}
        {@render overflow('v')}
    </div>

    <div class="status">
        <p>选择对象并使用 MB3，或者双击某一对象</p>
        <span class="cell message"></span>
        <span class="cell"></span>
        <span class="cell mid"></span>
        <button aria-label="全屏">{@render icon('full')}</button>
    </div>

    <div class="rail">
        <div class="dock">
            <button aria-label="向左"><svg viewBox="0 0 10 10"><path d="M9 1L2 5l7 4" /></svg></button>
            <span></span>
            <button aria-label="向右"><svg viewBox="0 0 10 10"><path d="M1 1l7 4-7 4" /></svg></button>
        </div>
    </div>

    <main>
        <aside>
            {#each sideTabs as [name, spaced]}
                <button class:spaced aria-label={name}>{@render icon(name)}</button>
            {/each}
        </aside>
        <div class="splitter"></div>
        <section class="viewport">
            <svg class="model" viewBox="-279 -281 560 564">
                <polygon points={gear} fill="#f00" stroke="#333" shape-rendering="crispEdges" />
                <path d="M0-51V0h51" fill="none" stroke="#ccc" stroke-width="2" shape-rendering="crispEdges" />
                <g class="axis" fill="#ccc">
                    <text x="1" y="-57">YC</text>
                    <text x="0" y="1">ZC</text>
                    <text x="58" y="1">XC</text>
                </g>
            </svg>
            <svg class="triad" viewBox="0 0 70 66">
                <circle cx="8" cy="56" r="5" fill="#aaa" />
                <path d="M8 15v37" stroke="#00d08a" stroke-width="2" />
                <path d="M13 56h36" stroke="#ff2a2a" stroke-width="2" />
                <g class="small">
                    <text x="5" y="10" fill="#00c080">Y</text>
                    <text x="58" y="61" fill="#ff2a2a">X</text>
                    <text x="5" y="60" fill="#22f">Z</text>
                </g>
            </svg>
            <div class="gauge"><span></span></div>
            <div class="ime">
                {@render icon('pen')}
                <b>中</b>
                {#each ['moon', 'punct', 'person', 'keyboard', 'ie'] as name}
                    {@render icon(name)}
                {/each}
                {@render caret()}
            </div>
        </section>
    </main>

    <footer class="taskbar">
        <div class="ghost" aria-hidden="true">
            <p>面齿轮顶部距离,<span>1.5</span></p>
            <p>面齿轮顶部减薄,<span>03</span></p>
        </div>
        <div class="tasks">
            {#each tasks as [name, kind]}
                <button class={kind} aria-label={name}>{@render icon(name)}</button>
            {/each}
        </div>
        <div class="tray">
            <svg class="up" viewBox="0 0 8 5" aria-hidden="true"><path d="M0 5h8L4 0z" /></svg>
            {#each tray as name}
                {@render icon(name)}
            {/each}
        </div>
        <div class="clock"><span>简体</span><time>21:52</time></div>
    </footer>
</div>

<style>
    :global(body) {
        margin: 0;
        overflow: hidden;
    }

    .screen {
        display: flex;
        flex-direction: column;
        height: 100vh;
        overflow: hidden;
        background: #d8d8d8;
        color: #000;
        font: 12px/16px "Noto Sans", "Noto Sans CJK SC", sans-serif;
    }

    .screen :global(*) {
        box-sizing: border-box;
    }

    .defs {
        position: absolute;
        width: 0;
        height: 0;
    }

    button {
        display: flex;
        align-items: center;
        justify-content: center;
        margin: 0;
        padding: 0;
        border: 0;
        background: none;
        color: inherit;
        font: inherit;
        flex: none;
    }

    .icon {
        width: 16px;
        height: 16px;
        flex: none;
        overflow: visible;
    }

    .arrow {
        width: 5px;
        height: 3px;
        flex: none;
        fill: #000;
    }

    .titlebar {
        display: flex;
        align-items: center;
        height: 24px;
        flex: none;
        padding: 0 1px 0 3px;
        border-top: 1px solid #000;
        border-bottom: 1px solid #000;
        background: linear-gradient(#85858a 0, #57575b 3px, #3c3c3e 7px, #1a1a1a 8px, #1c1c1c 100%);
        color: #fff;
    }

    h1 {
        flex: 1;
        margin: 0 0 0 5px;
        font-size: 15px;
        line-height: 20px;
        font-weight: 400;
        white-space: pre;
    }

    .titlebar strong {
        margin-right: 27px;
        font: 800 15px/20px "Open Sans", sans-serif;
    }

    .winbtns {
        display: flex;
        gap: 4px;
    }

    .winbtns button {
        width: 20px;
        height: 20px;
        border: 1px solid #777;
        border-radius: 3px;
        background: linear-gradient(#77777a, #333 55%, #444);
    }

    .winbtns .close {
        border-color: #f0a090;
        background: linear-gradient(#f08a70, #d83c18 55%, #e85838);
    }

    .winbtns svg, .docbtns svg {
        width: 12px;
        height: 12px;
        fill: none;
        stroke: #fff;
    }

    .menubar {
        display: flex;
        align-items: center;
        height: 26px;
        flex: none;
        padding: 0 4px 2px 0;
        border-bottom: 1px solid #bcbcbc;
        background: linear-gradient(#e8e8e8, #dedede);
    }

    .menus {
        display: flex;
        flex: 1;
        gap: 12px;
        margin-left: 6px;
        white-space: nowrap;
    }

    .docbtns {
        display: flex;
        gap: 2px;
    }

    .docbtns button {
        width: 17px;
        height: 17px;
        border: 1px solid #777;
        border-radius: 4px;
        background: #f2f2f2;
    }

    .docbtns svg {
        stroke: #666;
    }

    .grip {
        width: 7px;
        height: 19px;
        flex: none;
        background: repeating-linear-gradient(#999 0 2px, #e6e6e6 2px 3px, transparent 3px 4px) 4px 0 / 2px 100% no-repeat;
    }

    .toolrow {
        display: flex;
        height: 27px;
        flex: none;
        background: #d8d8d8;
    }

    .toolrow.second {
        border-bottom: 1px solid #999;
    }

    .band {
        display: flex;
        align-items: center;
        flex: none;
        border-top: 1px solid #f0f0f0;
        border-right: 1px solid #b4b4b4;
        border-bottom: 1px solid #bcbcbc;
        border-left: 1px solid #eee;
        background: linear-gradient(#dedede, #d2d2d2);
    }

    .band.first {
        margin-right: 20px;
    }

    .second .band {
        border-bottom-color: #d0d0d0;
    }

    .grow {
        flex: 1;
    }

    .start {
        width: 58px;
        padding-left: 3px;
        gap: 4px;
        justify-content: flex-start;
    }

    .tool {
        width: 23px;
        height: 23px;
    }

    .pressed {
        border: 1px solid #555;
        border-radius: 3px;
        background: #fff;
    }

    .sep {
        width: 6px;
        height: 23px;
        flex: none;
        background: linear-gradient(90deg, #bababa 1px, #f4f4f4 1px) 3px 0 / 2px 100% no-repeat;
    }

    .drop {
        width: 12px;
        height: 23px;
    }

    .drop.tight {
        width: 8px;
    }

    .overflow {
        flex-direction: column;
        justify-content: flex-end;
        gap: 6px;
        width: 13px;
        height: 23px;
        margin-left: auto;
        padding-bottom: 6px;
    }

    .overflow.wide {
        width: 15px;
    }

    .chevrons {
        width: 8px;
        height: 5px;
        fill: none;
        stroke: #000;
    }

    .selection {
        display: flex;
        align-items: center;
        height: 30px;
        flex: none;
        padding: 0 2px 2px 5px;
        border-bottom: 1px solid #b4b4b4;
        background: linear-gradient(#c6c6c6, #d8d8d8 14px, #dcdcdc);
    }

    .combo {
        position: relative;
        display: flex;
        height: 20px;
        margin-right: 8px;
        border: 2px solid #777;
        border-color: #666 #888 #888 #777;
        border-radius: 4px;
        background: #fff;
        overflow: hidden;
    }

    .filter {
        width: 143px;
    }

    .scope {
        width: 151px;
        margin-right: 4px;
    }

    select {
        width: 100%;
        padding: 0;
        border: 0;
        appearance: none;
        background: #fff;
        color: #000;
        font: inherit;
    }

    .knob {
        position: absolute;
        top: 0;
        right: 0;
        display: flex;
        align-items: center;
        justify-content: center;
        width: 16px;
        height: 16px;
        background: linear-gradient(#d8ecff, #7ab8f4);
        pointer-events: none;
    }

    .knob svg {
        width: 11px;
        height: 6px;
        fill: #222;
    }

    .status {
        display: flex;
        align-items: center;
        height: 22px;
        flex: none;
        border-top: 1px solid #f0f0f0;
        border-bottom: 1px solid #999;
        background: #d9d9d9;
    }

    .status p {
        flex: 1;
        margin: 0 0 0 3px;
        font-size: 13px;
        font-weight: 700;
    }

    .cell {
        width: 20px;
        height: 20px;
        flex: none;
        border-left: 1px solid #b4b4b4;
        box-shadow: inset 1px 0 #f0f0f0;
    }

    .message {
        width: 47.200%;
    }

    .mid {
        width: 36px;
    }

    .status button {
        width: 22px;
        height: 20px;
        border-left: 1px solid #b4b4b4;
    }

    .status .icon {
        width: 14px;
        height: 14px;
    }

    .rail {
        position: relative;
        z-index: 1;
        height: 16px;
        flex: none;
        background: linear-gradient(#bebebe 0 5px, #888 5px 6px, #e6e6e6 6px 9px, #cfcfcf 9px 13px, #8c8c8c 13px 14px, #b4b4b4 14px 15px, #666 15px);
    }

    .dock {
        position: absolute;
        top: 0;
        left: 0;
        display: flex;
        height: 22px;
        border: 1px solid #666;
        background: #777;
    }

    .dock button {
        width: 20px;
        border: 1px solid #fff;
        background: linear-gradient(90deg, #eee, #ccc);
    }

    .dock span {
        width: 76px;
        border: 1px solid #777;
        background: linear-gradient(#555 0 2px, #444 7px, #1a1a1a 7px);
    }

    .dock svg {
        width: 10px;
        height: 10px;
        fill: none;
        stroke: #555;
        stroke-width: 2;
    }

    main {
        display: flex;
        flex: 1;
        min-height: 0;
        border-bottom: 1px solid #fff;
    }

    aside {
        display: flex;
        flex-direction: column;
        align-items: flex-end;
        gap: 1px;
        width: 27px;
        flex: none;
        padding-top: 15px;
        background: linear-gradient(90deg, #a8a8a8, #b6b6b6);
    }

    aside button {
        width: 21px;
        height: 33px;
        padding-left: 2px;
        border: 1px solid #666;
        border-right: 0;
        border-radius: 4px 0 0 4px;
        background: #dcdcdc;
        box-shadow: inset 1px 1px #f4f4f4;
    }

    .spaced {
        margin-top: 12px;
    }

    .splitter {
        width: 9px;
        flex: none;
        border: 1px solid #777;
        border-bottom: 0;
        background: #ececec;
    }

    .viewport {
        position: relative;
        display: flex;
        align-items: center;
        justify-content: center;
        flex: 1;
        min-width: 0;
        border-right: 1px solid #fff;
        background: linear-gradient(#b3b4b6, #e7e8e9 76%);
    }

    .model {
        width: 560px;
        height: 564px;
        flex: none;
    }

    .axis, .small {
        font: 14px/16px "Liberation Mono", monospace;
    }

    .small {
        font-size: 11px;
    }

    .triad {
        position: absolute;
        left: 70px;
        bottom: 70px;
        width: 70px;
        height: 66px;
    }

    .gauge {
        position: absolute;
        right: 0;
        bottom: 146px;
        width: 10px;
        height: 60px;
        border: 1px solid #777;
        border-radius: 4px;
        background: #444;
    }

    .gauge span {
        position: absolute;
        right: 3px;
        bottom: 4px;
        width: 2px;
        height: 15px;
        background: #6d2;
    }

    .ime {
        position: absolute;
        right: 350px;
        bottom: -1px;
        display: flex;
        align-items: center;
        justify-content: space-between;
        width: 144px;
        height: 22px;
        padding: 0 2px;
        border: 1px solid #9cc4e6;
        background: #f6fafd;
        color: #6293c2;
    }

    .ime b {
        font: 700 16px/20px "Noto Sans CJK SC", sans-serif;
    }

    .ime .icon {
        width: 15px;
        height: 15px;
    }

    .ime .arrow {
        fill: #6293c2;
    }

    .taskbar {
        position: relative;
        display: flex;
        align-items: stretch;
        height: 30px;
        flex: none;
        overflow: hidden;
        background: linear-gradient(130deg, #98856f 0 40px, #8b6a4b 42px, #94714f 90px, #a48a72 110px);
        color: #fff;
    }

    .ghost {
        position: absolute;
        top: -9px;
        left: 151px;
        color: rgba(60, 40, 25, 0.4);
        font: 300 21px/21px "Liberation Mono", "Noto Sans CJK SC", monospace;
        white-space: nowrap;
    }

    .ghost p {
        margin: 0;
    }

    .ghost span {
        margin-left: 54px;
    }

    .tasks {
        position: relative;
        display: flex;
        flex: 1;
        gap: 3px;
        padding: 1px 0 0 1px;
    }

    .tasks button {
        width: 43px;
        height: 29px;
        border: 1px solid rgba(255, 255, 255, 0.4);
        background: rgba(255, 255, 255, 0.06);
    }

    .tasks .plain {
        border-color: transparent;
        background: none;
    }

    .tasks .plain:nth-child(2) {
        margin: 0 1px 0 3px;
    }

    .tasks .active {
        border-color: #fff;
        background: rgba(255, 255, 255, 0.35);
    }

    .tasks .stack {
        padding-right: 6px;
        box-shadow: inset -4px 0 rgba(255, 255, 255, 0.2);
    }

    .tray {
        display: flex;
        align-items: center;
        gap: 8px;
        padding-right: 14px;
    }

    .up {
        width: 8px;
        height: 5px;
        margin-right: 5px;
        fill: #fff;
    }

    .clock {
        display: flex;
        align-items: center;
        gap: 28px;
        width: 120px;
        flex: none;
        background: linear-gradient(160deg, #6b5846, #7d6a56 50%, #6d5a47) 4px 0 no-repeat;
    }
</style>
